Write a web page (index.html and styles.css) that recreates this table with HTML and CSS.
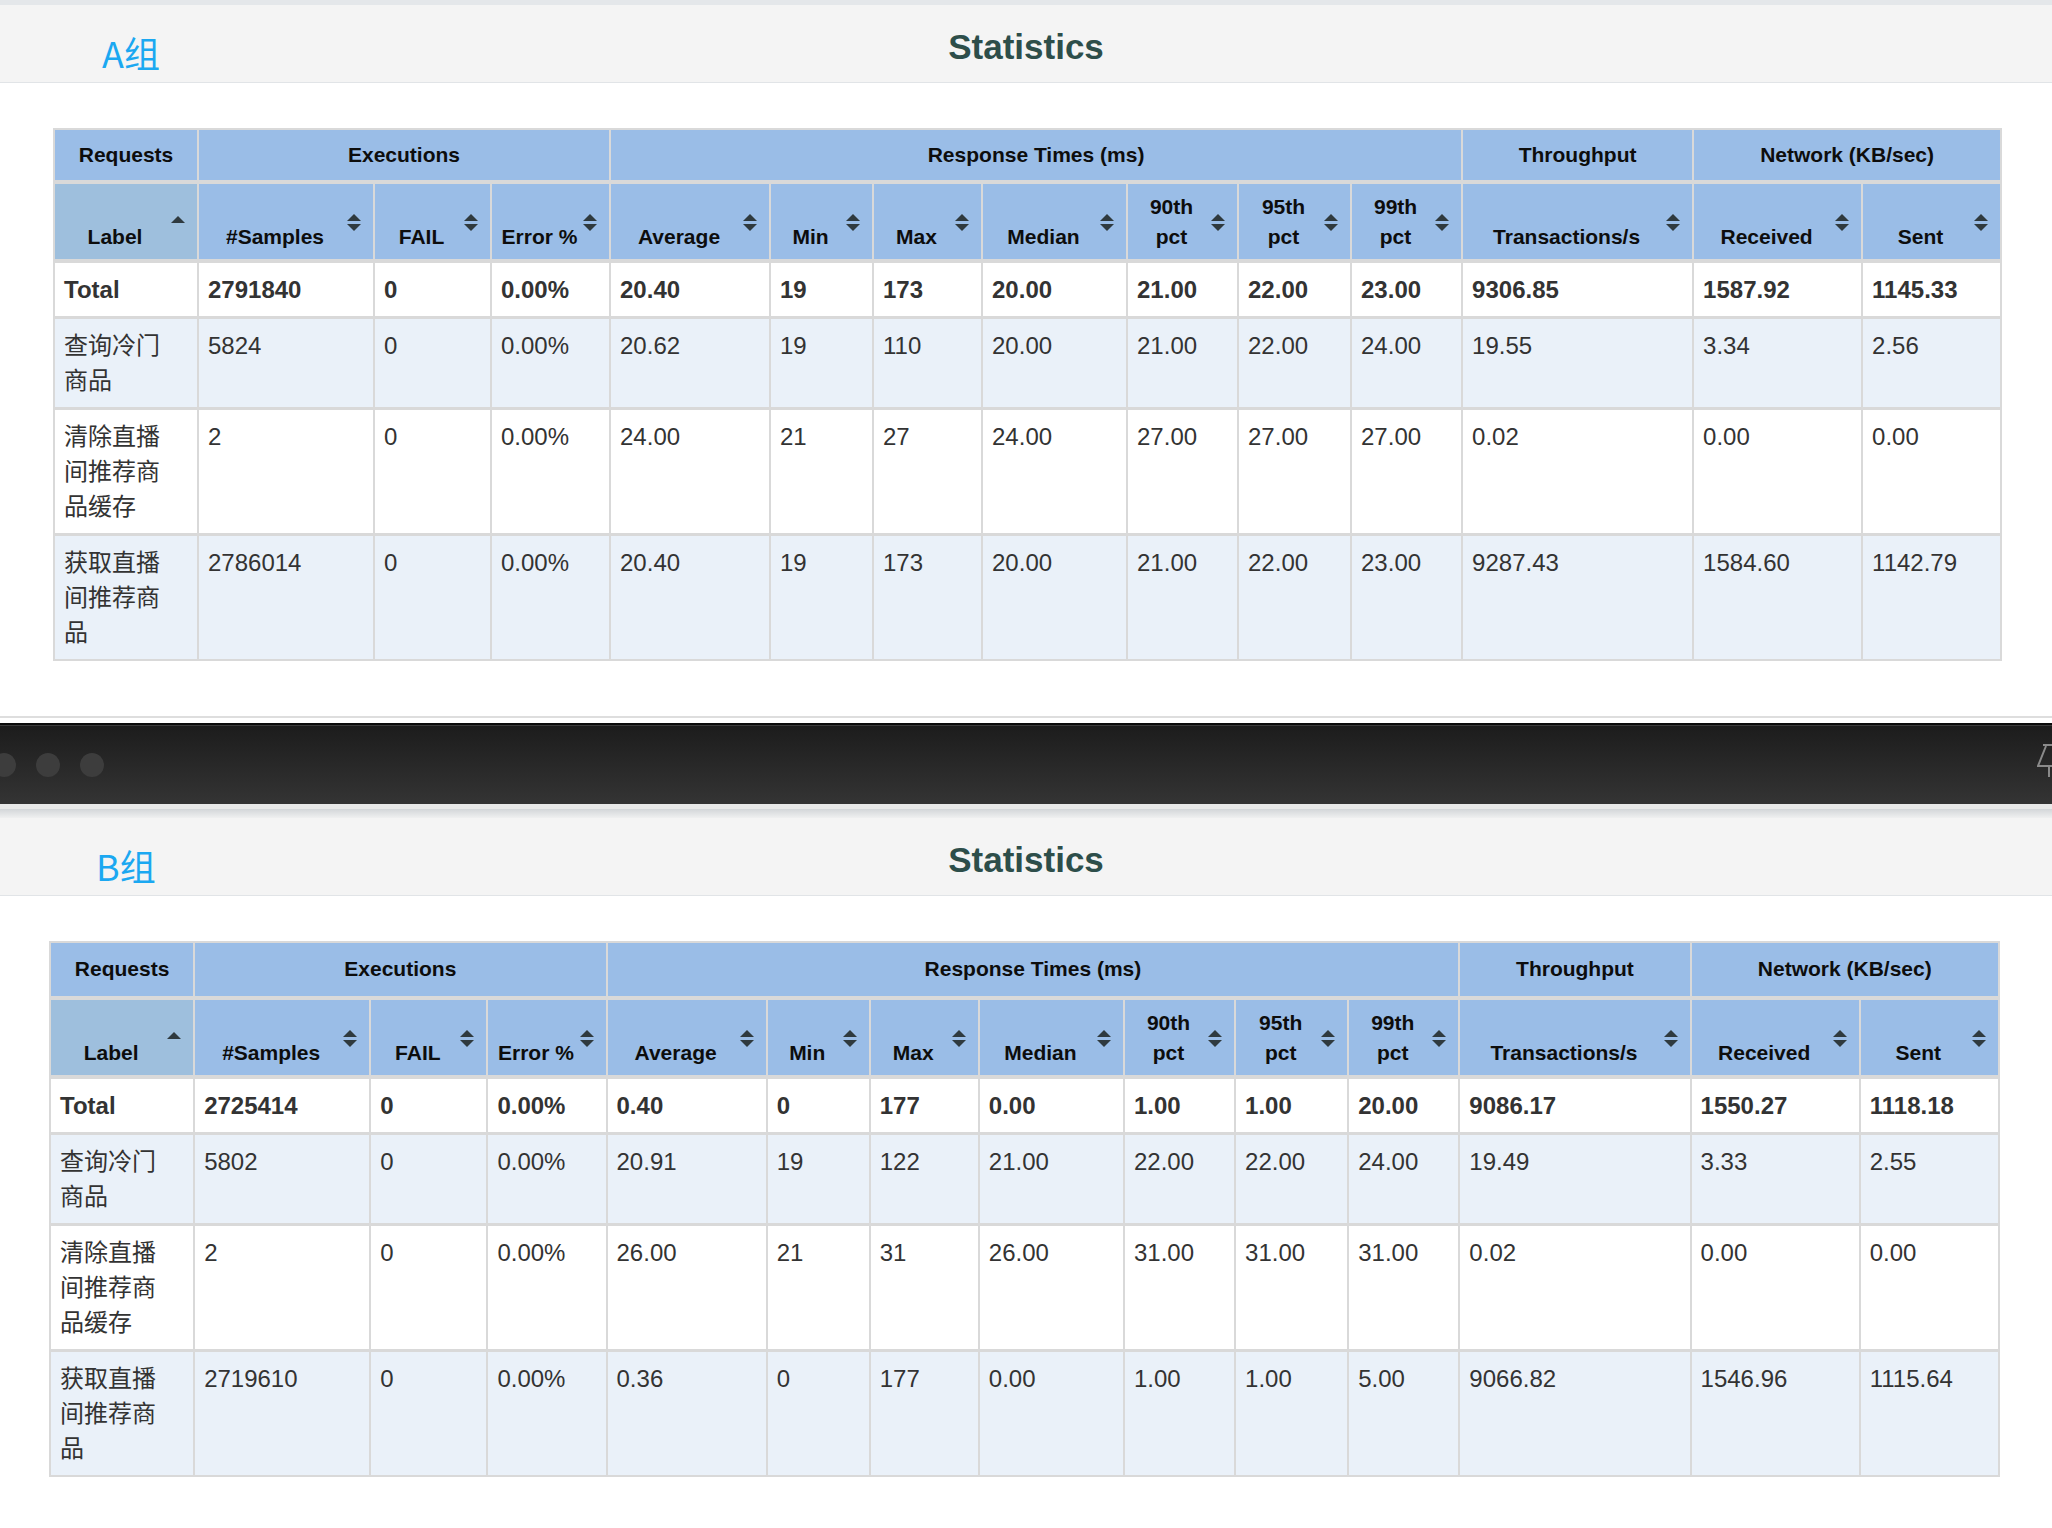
FILE: index.html
```html
<!DOCTYPE html>
<html lang="zh-CN">
<head>
<meta charset="utf-8">
<title>Statistics</title>
<link rel="stylesheet" href="styles.css">
</head>
<body>
<div class="top-strip"></div>

<section class="panel panel--a">
  <header class="panel-head">
    <div class="group">A组</div>
    <h1 class="title">Statistics</h1>
    <div class="spacer"></div>
  </header>
  <div class="panel-body">
    <table class="stats">
      <colgroup>
        <col class="c-label"><col class="c-samples"><col class="c-fail"><col class="c-err">
        <col class="c-avg"><col class="c-min"><col class="c-max"><col class="c-med">
        <col class="c-p90"><col class="c-p95"><col class="c-p99"><col class="c-tps">
        <col class="c-recv"><col class="c-sent">
      </colgroup>
      <thead>
        <tr class="group-row">
          <th>Requests</th><th colspan="3">Executions</th><th colspan="7">Response Times (ms)</th><th>Throughput</th><th colspan="2">Network (KB/sec)</th>
        </tr>
        <tr class="col-row">
          <th class="sorted">Label<svg class="sort" viewBox="0 0 14 17"><polygon points="0,9 7,2 14,9"/></svg></th>
          <th>#Samples<svg class="sort" viewBox="0 0 14 17"><polygon points="0,7 7,0 14,7"/><polygon points="0,10 14,10 7,17"/></svg></th>
          <th>FAIL<svg class="sort" viewBox="0 0 14 17"><polygon points="0,7 7,0 14,7"/><polygon points="0,10 14,10 7,17"/></svg></th>
          <th>Error %<svg class="sort" viewBox="0 0 14 17"><polygon points="0,7 7,0 14,7"/><polygon points="0,10 14,10 7,17"/></svg></th>
          <th>Average<svg class="sort" viewBox="0 0 14 17"><polygon points="0,7 7,0 14,7"/><polygon points="0,10 14,10 7,17"/></svg></th>
          <th>Min<svg class="sort" viewBox="0 0 14 17"><polygon points="0,7 7,0 14,7"/><polygon points="0,10 14,10 7,17"/></svg></th>
          <th>Max<svg class="sort" viewBox="0 0 14 17"><polygon points="0,7 7,0 14,7"/><polygon points="0,10 14,10 7,17"/></svg></th>
          <th>Median<svg class="sort" viewBox="0 0 14 17"><polygon points="0,7 7,0 14,7"/><polygon points="0,10 14,10 7,17"/></svg></th>
          <th>90th pct<svg class="sort" viewBox="0 0 14 17"><polygon points="0,7 7,0 14,7"/><polygon points="0,10 14,10 7,17"/></svg></th>
          <th>95th pct<svg class="sort" viewBox="0 0 14 17"><polygon points="0,7 7,0 14,7"/><polygon points="0,10 14,10 7,17"/></svg></th>
          <th>99th pct<svg class="sort" viewBox="0 0 14 17"><polygon points="0,7 7,0 14,7"/><polygon points="0,10 14,10 7,17"/></svg></th>
          <th>Transactions/s<svg class="sort" viewBox="0 0 14 17"><polygon points="0,7 7,0 14,7"/><polygon points="0,10 14,10 7,17"/></svg></th>
          <th>Received<svg class="sort" viewBox="0 0 14 17"><polygon points="0,7 7,0 14,7"/><polygon points="0,10 14,10 7,17"/></svg></th>
          <th>Sent<svg class="sort" viewBox="0 0 14 17"><polygon points="0,7 7,0 14,7"/><polygon points="0,10 14,10 7,17"/></svg></th>
        </tr>
      </thead>
      <tbody>
        <tr class="total">
          <td class="label">Total</td><td>2791840</td><td>0</td><td>0.00%</td><td>20.40</td><td>19</td><td>173</td><td>20.00</td><td>21.00</td><td>22.00</td><td>23.00</td><td>9306.85</td><td>1587.92</td><td>1145.33</td>
        </tr>
        <tr class="odd">
          <td class="label">查询冷门商品</td><td>5824</td><td>0</td><td>0.00%</td><td>20.62</td><td>19</td><td>110</td><td>20.00</td><td>21.00</td><td>22.00</td><td>24.00</td><td>19.55</td><td>3.34</td><td>2.56</td>
        </tr>
        <tr>
          <td class="label">清除直播间推荐商品缓存</td><td>2</td><td>0</td><td>0.00%</td><td>24.00</td><td>21</td><td>27</td><td>24.00</td><td>27.00</td><td>27.00</td><td>27.00</td><td>0.02</td><td>0.00</td><td>0.00</td>
        </tr>
        <tr class="odd">
          <td class="label">获取直播间推荐商品</td><td>2786014</td><td>0</td><td>0.00%</td><td>20.40</td><td>19</td><td>173</td><td>20.00</td><td>21.00</td><td>22.00</td><td>23.00</td><td>9287.43</td><td>1584.60</td><td>1142.79</td>
        </tr>
      </tbody>
    </table>
  </div>
</section>

<div class="titlebar">
  <div class="dots"><span class="dot"></span><span class="dot"></span><span class="dot"></span></div>
  <svg class="pin" viewBox="0 0 32 34" fill="none" stroke="#8a8a8a" stroke-width="2">
    <path d="M6 1 H32"/>
    <path d="M9 2 L1 22 H32"/>
    <path d="M12 22 V33"/>
  </svg>
</div>
<div class="sep-light"></div>
<div class="sep-shadow"></div>

<section class="panel panel--b">
  <header class="panel-head">
    <div class="group">B组</div>
    <h1 class="title">Statistics</h1>
    <div class="spacer"></div>
  </header>
  <div class="panel-body">
    <table class="stats stats--b">
      <colgroup>
        <col class="c-label"><col class="c-samples"><col class="c-fail"><col class="c-err">
        <col class="c-avg"><col class="c-min"><col class="c-max"><col class="c-med">
        <col class="c-p90"><col class="c-p95"><col class="c-p99"><col class="c-tps">
        <col class="c-recv"><col class="c-sent">
      </colgroup>
      <thead>
        <tr class="group-row">
          <th>Requests</th><th colspan="3">Executions</th><th colspan="7">Response Times (ms)</th><th>Throughput</th><th colspan="2">Network (KB/sec)</th>
        </tr>
        <tr class="col-row">
          <th class="sorted">Label<svg class="sort" viewBox="0 0 14 17"><polygon points="0,9 7,2 14,9"/></svg></th>
          <th>#Samples<svg class="sort" viewBox="0 0 14 17"><polygon points="0,7 7,0 14,7"/><polygon points="0,10 14,10 7,17"/></svg></th>
          <th>FAIL<svg class="sort" viewBox="0 0 14 17"><polygon points="0,7 7,0 14,7"/><polygon points="0,10 14,10 7,17"/></svg></th>
          <th>Error %<svg class="sort" viewBox="0 0 14 17"><polygon points="0,7 7,0 14,7"/><polygon points="0,10 14,10 7,17"/></svg></th>
          <th>Average<svg class="sort" viewBox="0 0 14 17"><polygon points="0,7 7,0 14,7"/><polygon points="0,10 14,10 7,17"/></svg></th>
          <th>Min<svg class="sort" viewBox="0 0 14 17"><polygon points="0,7 7,0 14,7"/><polygon points="0,10 14,10 7,17"/></svg></th>
          <th>Max<svg class="sort" viewBox="0 0 14 17"><polygon points="0,7 7,0 14,7"/><polygon points="0,10 14,10 7,17"/></svg></th>
          <th>Median<svg class="sort" viewBox="0 0 14 17"><polygon points="0,7 7,0 14,7"/><polygon points="0,10 14,10 7,17"/></svg></th>
          <th>90th pct<svg class="sort" viewBox="0 0 14 17"><polygon points="0,7 7,0 14,7"/><polygon points="0,10 14,10 7,17"/></svg></th>
          <th>95th pct<svg class="sort" viewBox="0 0 14 17"><polygon points="0,7 7,0 14,7"/><polygon points="0,10 14,10 7,17"/></svg></th>
          <th>99th pct<svg class="sort" viewBox="0 0 14 17"><polygon points="0,7 7,0 14,7"/><polygon points="0,10 14,10 7,17"/></svg></th>
          <th>Transactions/s<svg class="sort" viewBox="0 0 14 17"><polygon points="0,7 7,0 14,7"/><polygon points="0,10 14,10 7,17"/></svg></th>
          <th>Received<svg class="sort" viewBox="0 0 14 17"><polygon points="0,7 7,0 14,7"/><polygon points="0,10 14,10 7,17"/></svg></th>
          <th>Sent<svg class="sort" viewBox="0 0 14 17"><polygon points="0,7 7,0 14,7"/><polygon points="0,10 14,10 7,17"/></svg></th>
        </tr>
      </thead>
      <tbody>
        <tr class="total">
          <td class="label">Total</td><td>2725414</td><td>0</td><td>0.00%</td><td>0.40</td><td>0</td><td>177</td><td>0.00</td><td>1.00</td><td>1.00</td><td>20.00</td><td>9086.17</td><td>1550.27</td><td>1118.18</td>
        </tr>
        <tr class="odd">
          <td class="label">查询冷门商品</td><td>5802</td><td>0</td><td>0.00%</td><td>20.91</td><td>19</td><td>122</td><td>21.00</td><td>22.00</td><td>22.00</td><td>24.00</td><td>19.49</td><td>3.33</td><td>2.55</td>
        </tr>
        <tr>
          <td class="label">清除直播间推荐商品缓存</td><td>2</td><td>0</td><td>0.00%</td><td>26.00</td><td>21</td><td>31</td><td>26.00</td><td>31.00</td><td>31.00</td><td>31.00</td><td>0.02</td><td>0.00</td><td>0.00</td>
        </tr>
        <tr class="odd">
          <td class="label">获取直播间推荐商品</td><td>2719610</td><td>0</td><td>0.00%</td><td>0.36</td><td>0</td><td>177</td><td>0.00</td><td>1.00</td><td>1.00</td><td>5.00</td><td>9066.82</td><td>1546.96</td><td>1115.64</td>
        </tr>
      </tbody>
    </table>
  </div>
</section>
</body>
</html>
```

FILE: styles.css
```css
html, body {
  margin: 0;
  padding: 0;
  background: #ffffff;
}
body {
  font-family: "Liberation Sans", Arial, "Noto Sans CJK SC", sans-serif;
  color: #333333;
  overflow: hidden;
  width: 2052px;
  height: 1528px;
}

.top-strip {
  height: 5px;
  background: #e4e7ea;
}

.panel-head {
  display: grid;
  grid-template-columns: 1fr auto 1fr;
  align-items: center;
  box-sizing: border-box;
  height: 78px;
  padding-top: 6px;
  background: #f4f4f4;
  border-bottom: 1px solid #e1e4e7;
}
.group {
  justify-self: start;
  font-family: "Noto Sans CJK SC", "Liberation Sans", sans-serif;
  font-size: 36px;
  line-height: 40px;
  color: #1ba8f1;
  padding-top: 10px;
}
.panel--a .group { padding-left: 102px; }
.panel--b .group { padding-left: 96px; }
.title {
  margin: 0;
  font-family: "Liberation Sans", Arial, sans-serif;
  font-size: 35px;
  line-height: 40px;
  font-weight: 700;
  color: #2d4e4a;
}

.panel-body {
  padding-top: 45px;
}
.panel--a .panel-body {
  padding-left: 53px;
  padding-bottom: 55px;
  border-bottom: 2px solid #dedede;
}
.panel--b .panel-body {
  padding-left: 49px;
}

/* table */
.stats {
  border-collapse: collapse;
  table-layout: fixed;
  width: 1947px;
  border: 2px solid #d9d9d9;
}
.stats--b { width: 1951px; }

.c-label { width: 144px; }
.c-samples { width: 176px; }
.c-fail { width: 117px; }
.c-err { width: 119px; }
.c-avg { width: 160px; }
.c-min { width: 103px; }
.c-max { width: 109px; }
.c-med { width: 145px; }
.c-p90 { width: 111px; }
.c-p95 { width: 113px; }
.c-p99 { width: 111px; }
.c-tps { width: 231px; }
.c-recv { width: 169px; }
.c-sent { width: 139px; }

.stats th {
  position: relative;
  background: #9abde7;
  color: #0d0d0d;
  font-size: 21px;
  font-weight: 700;
  line-height: 30px;
  text-align: center;
  border: 2px solid #d9d9d9;
  border-bottom-width: 4px;
}
.group-row th {
  padding: 10px 8px;
  vertical-align: middle;
}
.stats--b .group-row th {
  padding: 11px 8px 12px;
}
.col-row th {
  padding: 8px 30px 7px 8px;
  vertical-align: bottom;
}
.col-row th.sorted {
  background: #9ebfdd;
}
.sort {
  position: absolute;
  right: 12px;
  top: 50%;
  width: 14px;
  height: 17px;
  margin-top: -8px;
  fill: #2f3a3f;
}

.stats td {
  padding: 9px;
  font-size: 24px;
  line-height: 35px;
  vertical-align: top;
  text-align: left;
  color: #333333;
  border: 2px solid #d9d9d9;
  border-top-width: 3px;
  background: #ffffff;
  font-family: "Liberation Sans", Arial, "Noto Sans CJK SC", sans-serif;
}
.stats td.label {
  padding-right: 20px;
}
.stats tr.odd td {
  background: #eaf1f9;
}
.stats tr.total td {
  font-weight: 700;
}

/* dark window title bar between the two shots */
.titlebar {
  margin-top: 5px;
  height: 79px;
  border-top: 2px solid #0b0b0b;
  box-shadow: inset 0 1px 0 #3c3c3c;
  background: linear-gradient(#1c1c1c, #343434);
  display: flex;
  align-items: center;
  justify-content: space-between;
}
.dots {
  display: flex;
  gap: 20px;
  margin-left: -8px;
}
.dot {
  width: 24px;
  height: 24px;
  border-radius: 50%;
  background: #3d3d3d;
}
.pin {
  width: 32px;
  height: 34px;
  margin-right: -17px;
  margin-top: -8px;
}
.sep-light {
  height: 5px;
  background: #e9e9e9;
}
.sep-shadow {
  height: 9px;
  background: linear-gradient(#d3d6d9, #eff0f0);
}
.panel--b .panel-head {
  padding-top: 6px;
}
.panel--b .group {
  padding-top: 10px;
}
```
